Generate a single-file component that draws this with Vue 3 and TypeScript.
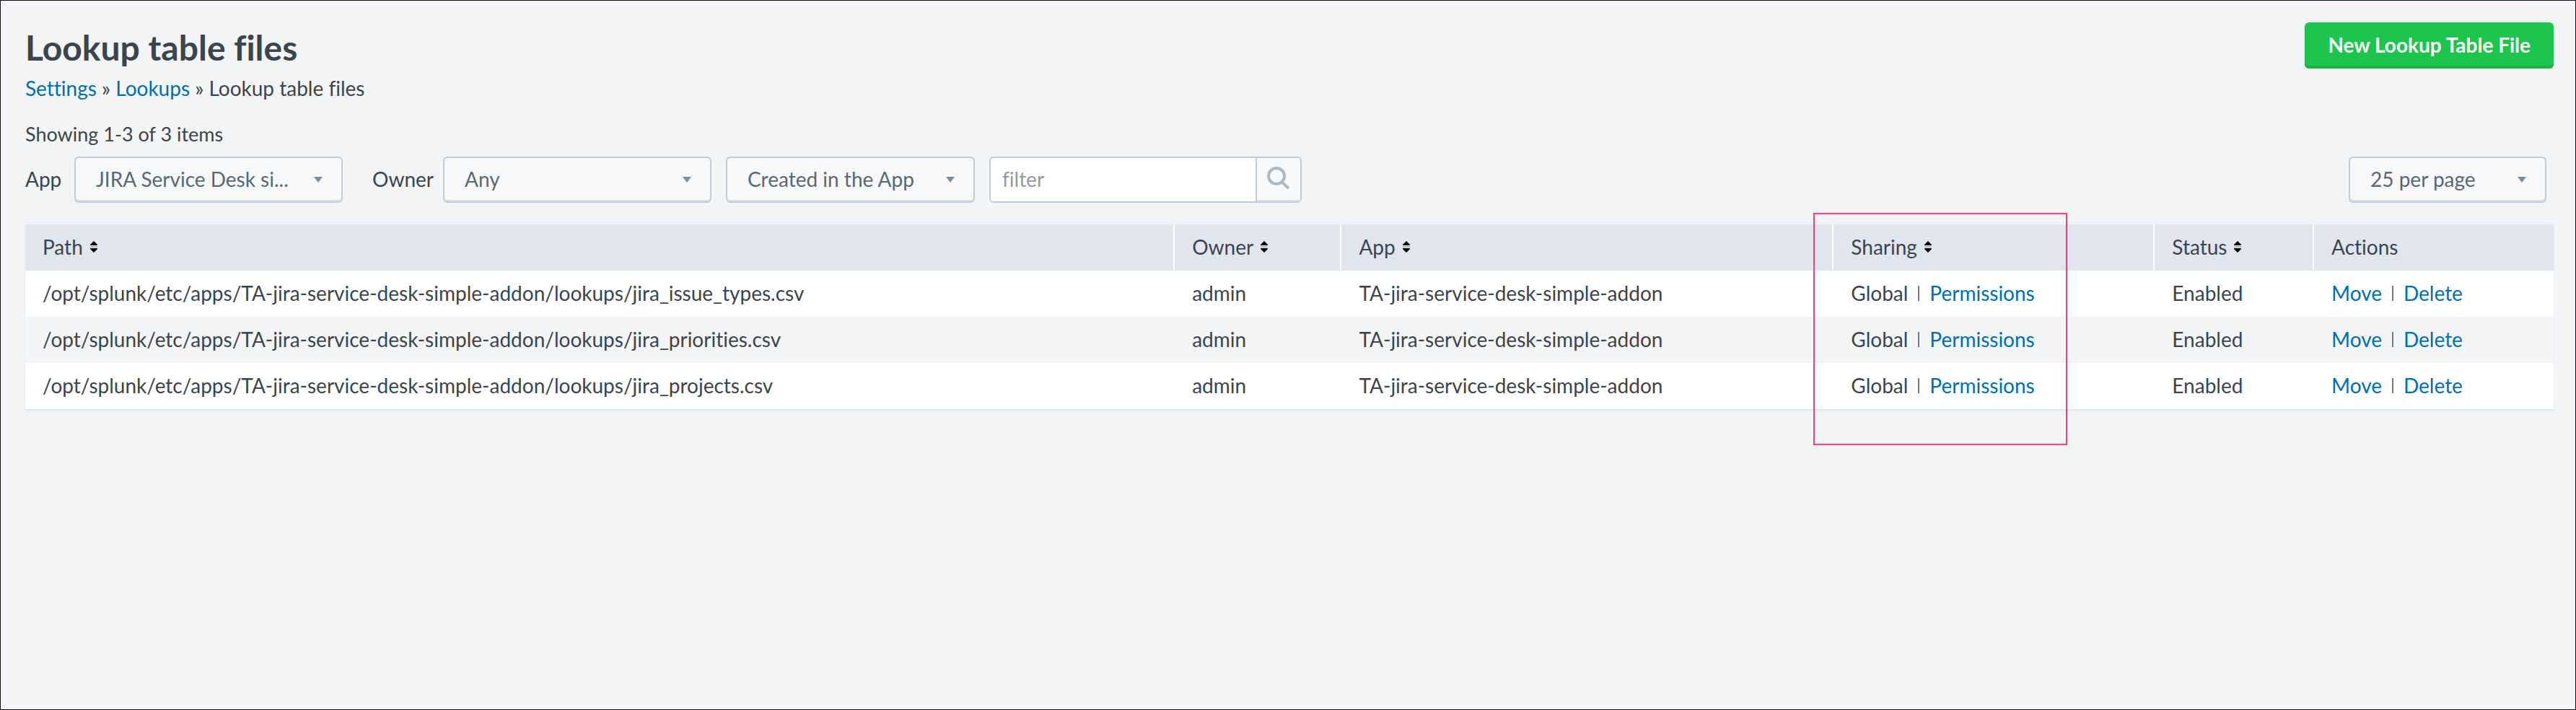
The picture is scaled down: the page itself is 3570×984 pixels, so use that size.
<script setup lang="ts">
import { ref } from 'vue'

interface LookupFile {
  path: string
  owner: string
  app: string
  sharing: string
  status: string
}

interface Column {
  key: string
  label: string
  sortable: boolean
}

const columns: Column[] = [
  { key: 'path', label: 'Path', sortable: true },
  { key: 'owner', label: 'Owner', sortable: true },
  { key: 'app', label: 'App', sortable: true },
  { key: 'sharing', label: 'Sharing', sortable: true },
  { key: 'status', label: 'Status', sortable: true },
  { key: 'actions', label: 'Actions', sortable: false },
]

const app = 'TA-jira-service-desk-simple-addon'
const files: LookupFile[] = ['jira_issue_types.csv', 'jira_priorities.csv', 'jira_projects.csv'].map((name) => ({
  path: `/opt/splunk/etc/apps/${app}/lookups/${name}`,
  owner: 'admin',
  app,
  sharing: 'Global',
  status: 'Enabled',
}))

const filterText = ref('')
</script>

<template>
  <main class="page">
    <header class="head">
      <div>
        <h1>Lookup table files</h1>
        <nav class="crumbs" aria-label="Breadcrumb">
          <a href="#settings">Settings</a> » <a href="#lookups">Lookups</a> » <span>Lookup table files</span>
        </nav>
      </div>
      <button type="button" class="primary">New Lookup Table File</button>
    </header>

    <p class="count">Showing 1-3 of 3 items</p>

    <form class="bar" @submit.prevent>
      <label class="label-app" for="app">App</label>
      <div class="select wide">
        <select id="app"><option>JIRA Service Desk si...</option></select>
        <svg class="arrow" viewBox="0 0 12 8" aria-hidden="true"><path d="M0 0h12L6 8z" /></svg>
      </div>
      <label class="label-owner" for="owner">Owner</label>
      <div class="select wide">
        <select id="owner"><option>Any</option></select>
        <svg class="arrow" viewBox="0 0 12 8" aria-hidden="true"><path d="M0 0h12L6 8z" /></svg>
      </div>
      <div class="select scope">
        <select aria-label="Scope"><option>Created in the App</option></select>
        <svg class="arrow" viewBox="0 0 12 8" aria-hidden="true"><path d="M0 0h12L6 8z" /></svg>
      </div>
      <div class="search">
        <input v-model="filterText" type="text" placeholder="filter" aria-label="filter" />
        <button type="submit" aria-label="Search">
          <svg viewBox="0 0 32 32" aria-hidden="true">
            <circle cx="13" cy="13" r="11" />
            <path d="M20 21l10 9" />
          </svg>
        </button>
      </div>
      <div class="select per-page">
        <select aria-label="Items per page"><option>25 per page</option></select>
        <svg class="arrow" viewBox="0 0 12 8" aria-hidden="true"><path d="M0 0h12L6 8z" /></svg>
      </div>
    </form>

    <table>
      <colgroup>
        <col v-for="c in columns" :key="c.key" :class="`col-${c.key}`" />
      </colgroup>
      <thead>
        <tr>
          <th v-for="c in columns" :key="c.key" scope="col">
            <button v-if="c.sortable" type="button" class="sort">
              {{ c.label }}
              <svg viewBox="0 0 10 16" aria-hidden="true">
                <path class="rule" d="M0 8h10" />
                <path d="M5 0l5 5v1H0V5zM5 16l5-5v-1H0v1z" />
              </svg>
            </button>
            <template v-else>{{ c.label }}</template>
            <span v-if="c.key === 'sharing'" class="highlight" aria-hidden="true"></span>
          </th>
        </tr>
      </thead>
      <tbody>
        <tr v-for="f in files" :key="f.path">
          <td>{{ f.path }}</td>
          <td>{{ f.owner }}</td>
          <td>{{ f.app }}</td>
          <td><span>{{ f.sharing }}</span><i class="divider"></i><a href="#permissions">Permissions</a></td>
          <td>{{ f.status }}</td>
          <td><a href="#move">Move</a><i class="divider"></i><a href="#delete">Delete</a></td>
        </tr>
      </tbody>
    </table>
  </main>
</template>

<style>
body {
  margin: 0;
}
</style>

<style scoped>
.page,
.page * {
  box-sizing: border-box;
}

.page {
  min-height: 100vh;
  padding: 30px 30px 30px 34px;
  border: 1px solid #0c0d14;
  background: #f2f4f6;
  color: #3c444d;
  font: 28px/40px Lato, "Liberation Sans", sans-serif;
  font-variant-ligatures: none;
}

a {
  color: #006eb0;
  text-decoration: none;
}

button,
input,
select {
  margin: 0;
  border-radius: 0;
  font: inherit;
  font-variant-ligatures: none;
}

button {
  cursor: pointer;
}

.head {
  display: flex;
  justify-content: space-between;
  align-items: flex-start;
}

h1 {
  margin: 7px 0 8px;
  font-size: 48px;
  line-height: 56px;
  font-weight: 700;
}

.primary {
  height: 64px;
  padding: 0 32px 2px;
  border: 0;
  border-radius: 6px;
  background: #1cc54e;
  box-shadow: inset 0 -4px #1eb246;
  color: #fff;
  font-weight: 700;
}

.count {
  margin: 24px 0 11px;
  font-size: 27px;
}

.bar {
  display: flex;
  align-items: center;
}

.bar label {
  padding-bottom: 2px;
}

.label-app {
  width: 68px;
}

.label-owner {
  width: 98px;
  margin-left: 41px;
}

.select {
  display: grid;
  align-items: center;
}

.select > * {
  grid-area: 1 / 1;
}

.select select {
  width: 100%;
  height: 64px;
  padding: 0 60px 2px 28px;
  border: 2px solid #c0cbd8;
  border-radius: 6px;
  background: #f7f8fa;
  box-shadow: inset 0 -2px #dddfe1;
  color: #5a6774;
  appearance: none;
}

.arrow {
  width: 12px;
  height: 8px;
  margin-right: 28px;
  justify-self: end;
  fill: #7d8c99;
  pointer-events: none;
}

.wide {
  width: 372px;
}

.scope {
  width: 345px;
  margin: 0 20px;
}

.per-page {
  width: 274px;
  margin: 0 10px 0 auto;
}

.search {
  display: flex;
  width: 433px;
  height: 64px;
  border: 2px solid #c0cbd8;
  border-radius: 6px;
  overflow: hidden;
}

.search input {
  flex: 1;
  min-width: 0;
  padding: 0 16px 2px;
  border: 0;
  background: #fff;
  color: #3c444d;
}

.search input::placeholder {
  color: #96999d;
  opacity: 1;
}

.search button {
  display: grid;
  place-items: center;
  width: 62px;
  padding: 0 0 4px;
  border: 0;
  border-left: 2px solid #c0cbd8;
  background: #f7f8fa;
  box-shadow: inset 0 -2px #dddfe1;
}

.search svg {
  width: 32px;
  height: 32px;
  fill: none;
  stroke: #afb9c1;
  stroke-width: 4;
}

table {
  width: 100%;
  margin-top: 30px;
  border-collapse: separate;
  border-spacing: 0;
  table-layout: fixed;
  box-shadow: 0 2px 2px #dce4eb;
}

.col-owner {
  width: 6.6%;
}

.col-app {
  width: 19.46%;
}

.col-sharing {
  width: 12.7%;
}

.col-status {
  width: 6.3%;
}

.col-actions {
  width: 9.53%;
}

th,
td {
  height: 64px;
  padding: 11px 24px 13px;
  text-align: left;
  font-weight: 400;
  white-space: nowrap;
}

th {
  position: relative;
  background: #e1e5ed;
}

th + th {
  border-left: 2px solid #fff;
}

td + td {
  padding-left: 26px;
}

tbody tr {
  background: #fff;
}

tbody tr:nth-child(even) {
  background: #f2f4f5;
}

.sort {
  display: flex;
  align-items: center;
  gap: 10px;
  padding: 0;
  border: 0;
  background: none;
  color: inherit;
}

.sort svg {
  width: 10px;
  height: 16px;
  fill: #000;
}

.sort .rule {
  stroke: #b9bcc2;
  stroke-width: 2;
}

.divider {
  display: inline-block;
  width: 2px;
  height: 21px;
  margin: 0 14px;
  background: #6f7a89;
}

/* Callout frame laid over the Sharing column */
.highlight {
  position: absolute;
  z-index: 1;
  top: -16px;
  left: -28px;
  width: 352px;
  height: 322px;
  border: 2px solid #fc3d74;
  pointer-events: none;
}
</style>
